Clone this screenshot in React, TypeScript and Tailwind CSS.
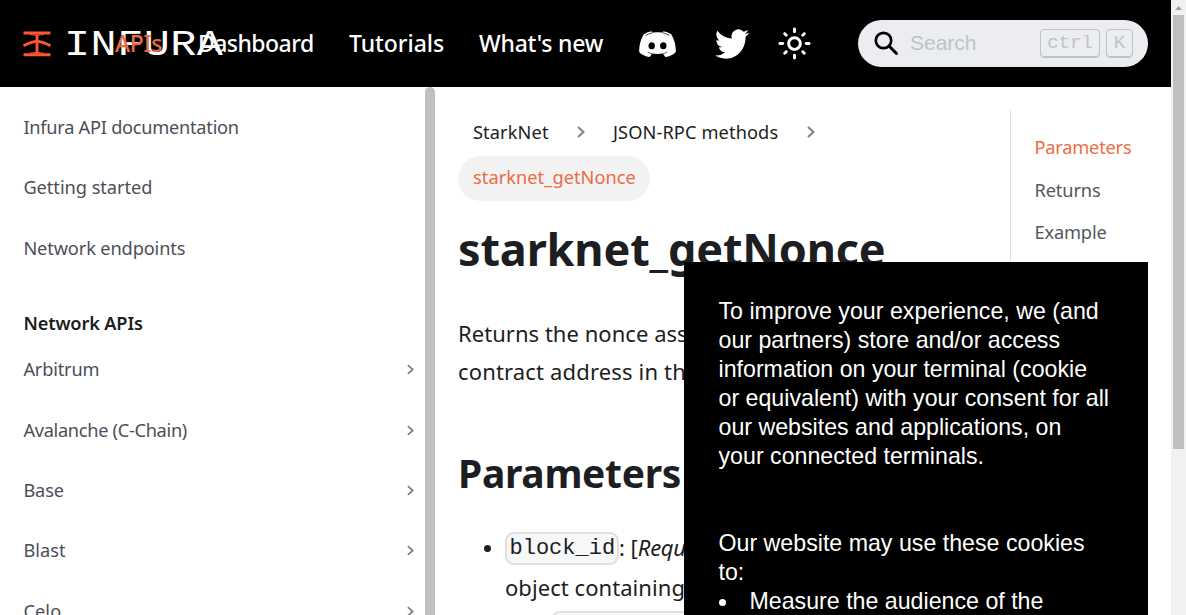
import type { ReactNode } from "react";

const navLinks = [
  { label: "APIs", className: "w-[83px] tracking-[-0.35px] text-[#ed6b44]" },
  { label: "Dashboard", className: "w-[151px] tracking-[-0.55px]" },
  { label: "Tutorials", className: "w-[130px] tracking-[-0.05px]" },
  { label: "What's new", className: "w-[160px] tracking-[-0.2px]" },
];

const guides = [
  { label: "Infura API documentation", className: "tracking-[-0.25px]" },
  { label: "Getting started", className: "tracking-[-0.03px]" },
  { label: "Network endpoints", className: "tracking-[-0.12px]" },
];

const networks = [
  { label: "Arbitrum", className: "tracking-[-0.17px]" },
  { label: "Avalanche (C-Chain)", className: "tracking-[-0.3px]" },
  { label: "Base", className: "tracking-[-0.1px]" },
  { label: "Blast", className: "tracking-[0.05px]" },
  { label: "Celo", className: "tracking-[0.1px]" },
];

function InfuraMark() {
  return (
    <svg width="28" height="26" viewBox="0 0 28 26" fill="none" stroke="#ff5533" className="shrink-0">
      <path d="M0.5 2H27.5M0.5 23.7H27.5" strokeWidth="3" />
      <path d="M14 2V23" strokeWidth="2.8" />
      <path d="M0.5 14.6L7 11.8L14 10L21 11.8L27.5 14.6" strokeWidth="2.8" />
      <path d="M7 3.6Q11 3.6 14 4.8Q17 3.6 21 3.6M7 22.2Q11 22 14 20.8Q17 22 21 22.2" strokeWidth="1" />
    </svg>
  );
}

function DiscordIcon() {
  return (
    <svg width="37" height="26" viewBox="0 0 37 26" fill="#fff" className="shrink-0">
      <path d="M12.6 0.3L13.2 1.5Q18.500 0.800 23.800 1.500L24.400 0.300Q28.500 0.900 32.200 3.200Q37.200 11.500 36.800 21Q33 25.200 26.300 26L24.200 23.100Q27.200 22.200 29.400 20.500Q18.500 25.500 7.600 20.500Q9.800 22.200 12.800 23.100L10.700 26Q4 25.200 0.200 21Q-0.200 11.500 4.800 3.200Q8.500 0.900 12.600 0.300Z" />
      <path d="M6.500 4.600Q9.500 2.500 13.500 1.800M30.500 4.600Q27.500 2.500 23.500 1.800" fill="none" stroke="#000" strokeWidth="0.7" />
      <ellipse cx="12.700" cy="14.800" rx="3.200" ry="3.500" fill="#000" />
      <ellipse cx="24.300" cy="14.800" rx="3.200" ry="3.500" fill="#000" />
    </svg>
  );
}

function TwitterIcon() {
  return (
    <svg width="34" height="36" viewBox="0 0 24 24" preserveAspectRatio="none" fill="#fff" className="shrink-0">
      <path d="M23.953 4.57a10 10 0 0 1-2.825.775 4.958 4.958 0 0 0 2.163-2.723c-.951.555-2.005.959-3.127 1.184a4.92 4.92 0 0 0-8.384 4.482C7.69 8.095 4.067 6.13 1.64 3.162a4.822 4.822 0 0 0-.666 2.475c0 1.71.87 3.213 2.188 4.096a4.904 4.904 0 0 1-2.228-.616v.06a4.923 4.923 0 0 0 3.946 4.827 4.996 4.996 0 0 1-2.212.085 4.936 4.936 0 0 0 4.604 3.417 9.867 9.867 0 0 1-6.102 2.105c-.39 0-.779-.023-1.17-.067a13.995 13.995 0 0 0 7.557 2.209c9.053 0 13.998-7.496 13.998-13.985 0-.21 0-.42-.015-.63A9.935 9.935 0 0 0 24 4.59z" />
    </svg>
  );
}

function SunIcon() {
  return (
    <svg width="35" height="35" viewBox="0 0 24 24" fill="#fff" className="shrink-0">
      <path d="M12,9c1.65,0,3,1.35,3,3s-1.35,3-3,3s-3-1.35-3-3S10.35,9,12,9 M12,7c-2.76,0-5,2.24-5,5s2.24,5,5,5s5-2.24,5-5 S14.76,7,12,7L12,7z M2,13l2,0c0.55,0,1-0.45,1-1s-0.45-1-1-1l-2,0c-0.55,0-1,0.45-1,1S1.45,13,2,13z M20,13l2,0c0.55,0,1-0.45,1-1 s-0.45-1-1-1l-2,0c-0.55,0-1,0.45-1,1S19.45,13,20,13z M11,2v2c0,0.55,0.45,1,1,1s1-0.45,1-1V2c0-0.55-0.45-1-1-1S11,1.45,11,2z M11,20v2c0,0.55,0.45,1,1,1s1-0.45,1-1v-2c0-0.55-0.45-1-1-1C11.45,19,11,19.45,11,20z M5.99,4.58c-0.39-0.39-1.03-0.39-1.41,0 c-0.39,0.39-0.39,1.03,0,1.41l1.06,1.06c0.39,0.39,1.03,0.39,1.41,0s0.39-1.03,0-1.41L5.99,4.58z M18.36,16.95 c-0.39-0.39-1.03-0.39-1.41,0c-0.39,0.39-0.39,1.03,0,1.41l1.06,1.06c0.39,0.39,1.03,0.39,1.41,0c0.39-0.39,0.39-1.03,0-1.41 L18.36,16.95z M19.42,5.99c0.39-0.39,0.39-1.03,0-1.41c-0.39-0.39-1.03-0.39-1.41,0l-1.06,1.06c-0.39,0.39-0.39,1.03,0,1.41 s1.03,0.39,1.41,0L19.42,5.99z M7.05,18.36c0.39-0.39,0.39-1.03,0-1.41c-0.39-0.39-1.03-0.39-1.41,0l-1.06,1.06 c-0.39,0.39-0.39,1.03,0,1.41s1.03,0.39,1.41,0L7.05,18.36z" />
    </svg>
  );
}

function Chevron({ className }: { className: string }) {
  return (
    <svg viewBox="0 0 8 12" fill="none" stroke="currentColor" strokeWidth="2" className={className}>
      <path d="M1 1L6.5 6L1 11" />
    </svg>
  );
}

function Key({ children, className }: { children: ReactNode; className: string }) {
  return (
    <kbd className={`flex h-[29px] items-center justify-center rounded-[4px] border border-[#bec3c9] pb-px font-['Liberation_Mono',monospace] text-[19px] leading-none text-[#bec3c9] shadow-[inset_0_-1px_0_#bec3c9] ${className}`}>
      {children}
    </kbd>
  );
}

function Header() {
  return (
    <header className="flex h-[87px] shrink-0 items-center bg-black pl-[23px] text-white">
      <div className="flex w-[92px] shrink-0 items-center">
        <InfuraMark />
        <span className="mt-[3px] ml-[13px] origin-left scale-x-[1.16] font-['Liberation_Mono',monospace] text-[37.5px] leading-[40px] tracking-[0.4px]">
          INFURA
        </span>
      </div>
      <nav className="relative mb-[2px] flex text-[23px] leading-[34px] font-medium whitespace-nowrap">
        {navLinks.map((l) => (
          <a key={l.label} className={`block shrink-0 ${l.className}`}>{l.label}</a>
        ))}
      </nav>
      <div className="flex w-[219px] shrink-0 items-center">
        <div className="mt-[1px] flex"><DiscordIcon /></div>
        <div className="ml-[39px] flex"><TwitterIcon /></div>
        <div className="ml-[28px] flex"><SunIcon /></div>
      </div>
      <div className="flex h-[47px] w-[290px] shrink-0 items-center rounded-full bg-[#ebedf0] pl-[16px]">
        <svg width="25" height="25" viewBox="0 0 25 25" fill="none" stroke="#000" className="shrink-0">
          <circle cx="9.5" cy="9.5" r="7.7" strokeWidth="2.7" />
          <path d="M15 15L22.5 22.5" strokeWidth="3" strokeLinecap="round" />
        </svg>
        <span className="mb-[2px] ml-[11px] w-[130px] font-['Liberation_Sans',sans-serif] text-[21px] leading-[28px] text-[#bec3c9]">Search</span>
        <Key className="w-[60px]">ctrl</Key>
        <Key className="ml-[6px] w-[27px]">K</Key>
      </div>
    </header>
  );
}

function Sidebar() {
  return (
    <aside className="flex w-[435px] shrink-0 overflow-hidden">
      <div className="w-[425px] shrink-0 pt-[10px] pl-[23.400px] text-[18.2px] leading-[28px] whitespace-nowrap text-[#4b4f57]">
        {guides.map((g) => (
          <div key={g.label} className={`flex h-[60.3px] items-center ${g.className}`}>{g.label}</div>
        ))}
        <div className="h-[61.4px] pt-[31px] font-semibold tracking-[-0.15px] text-[#1c1e21]">Network APIs</div>
        {networks.map((n) => (
          <div key={n.label} className={`flex h-[60.3px] items-center justify-between pr-[11px] ${n.className}`}>
            {n.label}
            <Chevron className="mt-[1px] h-[11px] w-[7px] text-[#808080]" />
          </div>
        ))}
      </div>
      <div className="w-[10px] rounded-t-[5px] bg-[#c0c0c0]" />
    </aside>
  );
}

function Article() {
  return (
    <article className="w-[575px] shrink-0 overflow-hidden pl-[23px] whitespace-nowrap text-[#1c1e21]">
      <div className="mt-[22px] flex h-[45px] items-center pl-[15px] text-[18.2px] leading-[28px] tracking-[0.12px]">
        <span className="w-[104px]">StarkNet</span>
        <Chevron className="mt-[1px] h-[12px] w-[8px] text-[#808080]" />
        <span className="ml-[28px] w-[194px]">JSON-RPC methods</span>
        <Chevron className="mt-[1px] h-[12px] w-[8px] text-[#808080]" />
      </div>
      <div className="mt-[2px] flex h-[45px] w-[192px] items-center rounded-full bg-[#f2f2f2] pb-[2px] pl-[15px] text-[18.2px] tracking-[0.06px] text-[#ed6b44]">
        starknet_getNonce
      </div>
      <h1 className="mt-[20px] h-[56px] text-[45px] leading-[56px] font-bold tracking-[-0.15px]">starknet_getNonce</h1>
      <div className="mt-[37px] text-[22px] leading-[38px]">
        <p className="tracking-[0.04px]">Returns the nonce associated with the</p>
        <p className="tracking-[0.16px]">contract address in the given block.</p>
      </div>
      <h2 className="mt-[59px] h-[48px] text-[39px] leading-[48px] font-bold tracking-[-0.3px]">Parameters</h2>
      <ul className="mt-[31px] pl-[47px] text-[22px] leading-[38px]">
        <li className="h-[40px]">
          <div className="-ml-[21px] flex items-center">
            <span className="mt-[2px] mr-[14px] size-[7px] rounded-full bg-[#1c1e21]" />
            <code className="mt-[3px] h-[33px] w-[114px] rounded-[9px] border-2 border-[#dfe0e1] bg-[#f6f7f8] pl-[2.5px] font-['Liberation_Mono',monospace] text-[22px] leading-[29px]">block_id</code>
            <span>: [<em className="tracking-[-0.3px]">Required</em>] block</span>
          </div>
        </li>
        <li className="tracking-[0.06px]">object containing one of:</li>
        <li className="mt-[5px] ml-[46px] h-[33px] w-[160px] rounded-[9px] border-2 border-[#dfe0e1] bg-[#f6f7f8]" />
      </ul>
    </article>
  );
}

function TableOfContents() {
  return (
    <div className="mt-[23px] h-[505px] w-[161px] shrink-0 border-l border-[#dadde1] pt-[16px] pl-[23.5px] text-[18.2px] leading-[42.5px] text-[#525860]">
      <div className="tracking-[-0.19px] text-[#ed6b44]">Parameters</div>
      <div className="tracking-[-0.12px]">Returns</div>
      <div className="tracking-[-0.15px]">Example</div>
    </div>
  );
}

function CookieNotice() {
  return (
    <div className="absolute top-[262px] left-[684px] h-[353px] w-[464px] overflow-hidden bg-black pt-[35px] pl-[34.5px] font-['Liberation_Sans',sans-serif] text-[23.2px] leading-[29px] whitespace-nowrap text-white">
      <p>
        To improve your experience, we (and<br />
        our partners) store and/or access<br />
        information on your terminal (cookie<br />
        or equivalent) with your consent for all<br />
        our websites and applications, on<br />
        your connected terminals.
      </p>
      <p className="mt-[58px]">
        Our website may use these cookies<br />
        to:
      </p>
      <div className="flex items-center">
        <span className="mt-[2px] mr-[24px] size-[7px] rounded-full bg-white" />
        Measure the audience of the
      </div>
    </div>
  );
}

export default function App() {
  return (
    <div className="relative flex h-[615px] w-[1186px] overflow-hidden bg-white font-['Noto_Sans',sans-serif]">
      <div className="flex w-[1171px] shrink-0 flex-col overflow-hidden">
        <Header />
        <div className="flex h-[528px] overflow-hidden">
          <Sidebar />
          <Article />
          <TableOfContents />
        </div>
      </div>
      <div className="flex w-[15px] flex-col items-center bg-[#f1f1f1]">
        <svg width="7" height="4" viewBox="0 0 7 4" className="mt-[6px] shrink-0">
          <path d="M0 4L3.5 0L7 4Z" fill="#a0a0a0" />
        </svg>
        <div className="mt-[5px] h-[434px] w-[11px] bg-[#c0c0c0]" />
      </div>
      <CookieNotice />
    </div>
  );
}
